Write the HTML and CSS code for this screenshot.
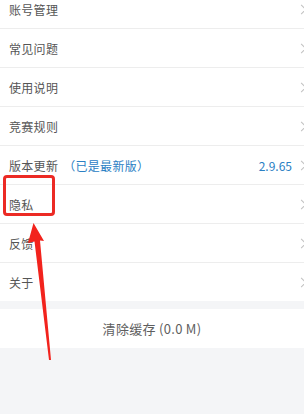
FILE: index.html
```html
<!DOCTYPE html>
<html lang="zh-CN">
<head>
  <meta charset="UTF-8" />
  <meta name="viewport" content="width=device-width, initial-scale=1.0"/>
  <title>设置</title>
  <link rel="stylesheet" href="styles.css">
</head>
<body>
  <div class="page">
    <!-- Settings list -->
    <ul class="menu">
      <li class="row"><span class="label">账号管理</span><i class="chev"></i></li>
      <li class="row"><span class="label">常见问题</span><i class="chev"></i></li>
      <li class="row"><span class="label">使用说明</span><i class="chev"></i></li>
      <li class="row"><span class="label">竞赛规则</span><i class="chev"></i></li>
      <li class="row">
        <span class="label">版本更新 <span class="latest">（已是最新版）</span></span>
        <span class="version">2.9.65</span><i class="chev"></i>
      </li>
      <li class="row"><span class="label">隐私</span><i class="chev"></i></li>
      <li class="row"><span class="label">反馈</span><i class="chev"></i></li>
      <li class="row"><span class="label">关于</span><i class="chev"></i></li>
    </ul>

    <!-- Clear cache -->
    <div class="clear-cache">清除缓存 (0.0 M)</div>

    <!-- Annotation overlay -->
    <div class="mark-box"></div>
    <svg class="mark-arrow" width="304" height="414" viewBox="0 0 304 414">
      <path d="M33.5 233 L44 251 L40 250.5 L51 370 L49 370 L34.5 251.5 L28 253 Z" fill="#f2231d"/>
    </svg>
  </div>
</body>
</html>
```

FILE: styles.css
```css
/*
  Reset and fonts
*/
* {
  box-sizing: border-box;
  margin: 0;
  padding: 0;
}
html, body {
  width: 304px;
  height: 414px;
  overflow: hidden;
}
body {
  background: #f4f5f7;
  font-family: "Noto Sans CJK SC", "Noto Sans", sans-serif;
  color: #555555;
}
.page {
  position: relative;
  width: 304px;
  height: 414px;
}
/*
  Settings list
*/
.menu {
  list-style: none;
  background: #ffffff;
  margin-top: -10px;
}
.row {
  display: flex;
  align-items: center;
  height: 39px;
  padding-left: 9px;
  border-bottom: 1px solid #ededed;
  font-size: 12px;
}
.row:last-child {
  border-bottom: none;
  height: 38px;
}
.label {
  flex: 1;
  letter-spacing: 0.3px;
}
.latest {
  color: #2b80c4;
  margin-left: 2px;
}
.version {
  color: #2b80c4;
  font-size: 12px;
  margin-right: 6px;
}
.chev {
  display: block;
  width: 7px;
  height: 7px;
  border-top: 1px solid #c2c2c2;
  border-right: 1px solid #c2c2c2;
  transform: rotate(45deg);
  margin-right: -1px;
}
/*
  Clear cache button
*/
.clear-cache {
  margin-top: 8px;
  height: 39px;
  background: #ffffff;
  display: flex;
  align-items: center;
  justify-content: center;
  font-size: 13px;
  color: #5e5e5e;
  letter-spacing: 0.3px;
}
/*
  Red annotation
*/
.mark-box {
  position: absolute;
  left: 3px;
  top: 185px;
  width: 52px;
  height: 41px;
  border: 3px solid #ec2a24;
  border-radius: 4px;
}
.mark-arrow {
  position: absolute;
  left: 0;
  top: 0;
}
```
